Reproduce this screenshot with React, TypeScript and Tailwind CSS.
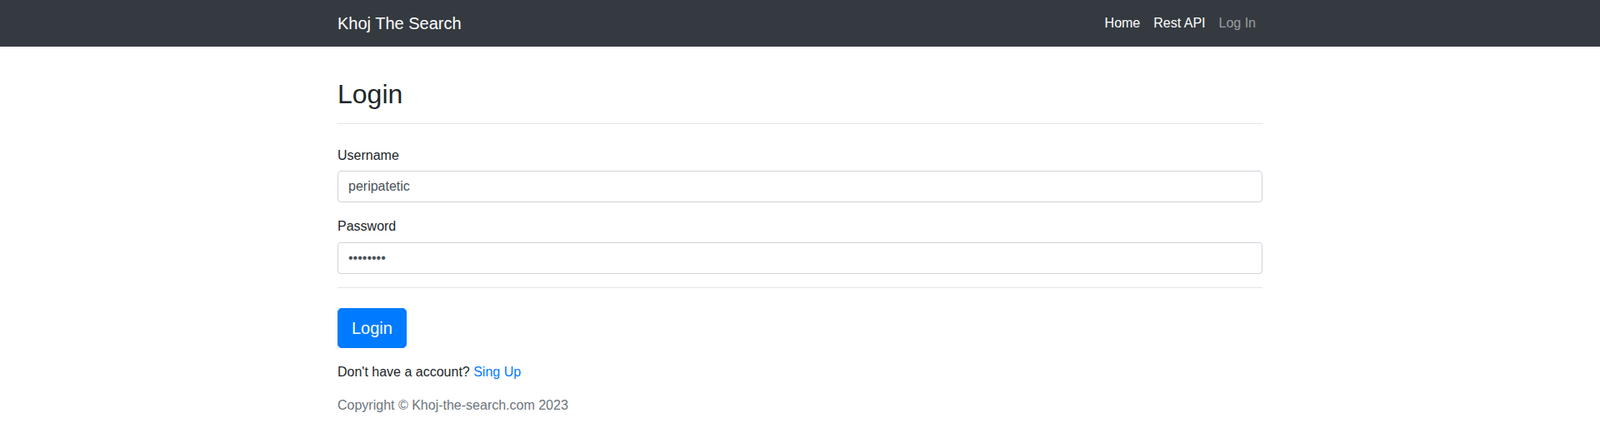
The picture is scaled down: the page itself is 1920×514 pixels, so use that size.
import React from 'react';

export default function App() {
  return (
    <div className="min-h-screen bg-white text-[#212529] font-['Liberation_Sans',Arial,sans-serif] text-base">
      {/* Navbar */}
      <nav className="bg-[#343a40] h-14">
        <div className="w-[1140px] mx-auto px-[15px] h-full flex items-center justify-between">
          <a href="#" className="text-white text-[20px] leading-[30px]">
            Khoj The Search
          </a>
          <div className="flex items-center">
            <a href="#" className="px-2 leading-6 text-white">Home</a>
            <a href="#" className="px-2 leading-6 text-white">Rest API</a>
            <a href="#" className="px-2 leading-6 text-[rgba(255,255,255,0.5)]">Log In</a>
          </div>
        </div>
      </nav>

      {/* Login form */}
      <div className="w-[1140px] mx-auto px-[15px] pt-[38px]">
        <h2 className="text-[32px] leading-[38px] font-medium">Login</h2>
        <div className="mt-4 border-t border-[rgba(0,0,0,0.1)]"></div>

        <form className="pt-[26px]">
          <div className="mb-[17px]">
            <label className="block leading-6 mb-1.5">Username</label>
            <input
              type="text"
              defaultValue="peripatetic"
              className="block w-full h-[38px] px-3 border border-[#ced4da] rounded text-[#495057] outline-none"
            />
          </div>
          <div>
            <label className="block leading-6 mb-[7px]">Password</label>
            <input
              type="password"
              defaultValue="password"
              className="block w-full h-[38px] px-3 border border-[#ced4da] rounded text-[#495057] outline-none"
            />
          </div>

          <div className="mt-4 border-t border-[rgba(0,0,0,0.1)]"></div>

          <button
            type="button"
            className="mt-6 px-4 py-2 text-[20px] leading-[30px] text-white bg-[#007bff] border border-[#007bff] rounded-[4.8px]"
          >
            Login
          </button>
        </form>

        <p className="mt-[17px] leading-6">
          Don't have a account? <a href="#" className="text-[#007bff]">Sing Up</a>
        </p>
        <p className="mt-4 leading-6 text-[#6c757d]">Copyright © Khoj-the-search.com 2023</p>
      </div>
    </div>
  );
}
